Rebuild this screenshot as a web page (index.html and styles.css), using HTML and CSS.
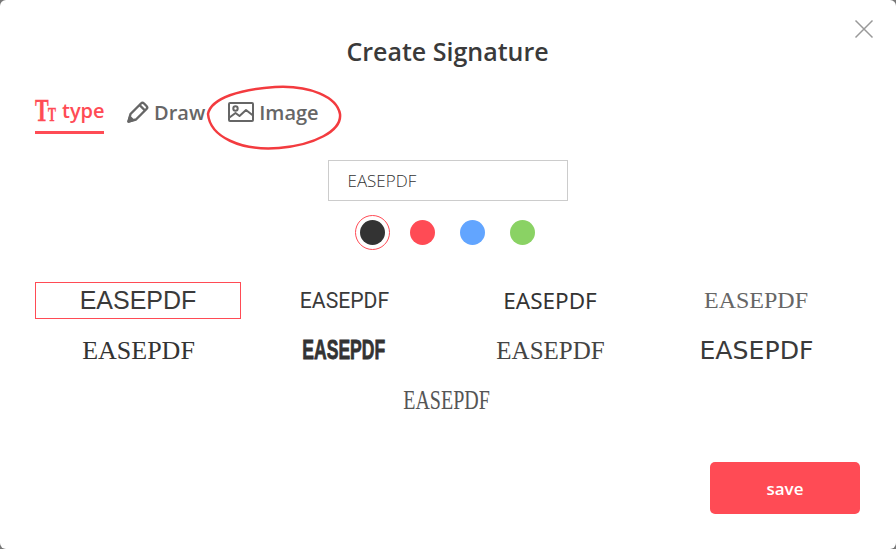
FILE: index.html
```html
<!DOCTYPE html>
<html lang="en">
<head>
    <meta charset="UTF-8">
    <meta name="viewport" content="width=device-width, initial-scale=1.0">
    <title>Create Signature</title>
    <link rel="stylesheet" href="styles.css">
</head>
<body>
    <div class="modal">
        <button class="close-btn" aria-label="Close">
            <svg width="20" height="20" viewBox="0 0 20 20"><path d="M1.5 1.5l17 17M18.5 1.5l-17 17" stroke="#999" stroke-width="1.5" fill="none"/></svg>
        </button>

        <h1 class="modal-title">Create Signature</h1>

        <div class="tabs">
            <a class="tab tab-type active">
                <span class="tt-icon" aria-hidden="true"><span class="tt-big">T</span><span class="tt-small">T</span></span>
                type
            </a>
            <a class="tab tab-draw">
                <svg width="22" height="22" viewBox="0 0 22 22" fill="none" stroke="#666" stroke-width="2.400" stroke-linejoin="round"><path d="M1.500 20.500L3.500 13 14 2.500c1-1 2-1 3 0L19.500 5c1 1 1 2 0 3L9 18.500z"/><path d="M12.500 4l5.500 5.500"/><path d="M1.500 20.500l4.500-1.500-3-3z" fill="#666"/></svg>
                Draw
            </a>
            <a class="tab tab-image">
                <svg width="26" height="20" viewBox="0 0 26 20" fill="none" stroke="#666" stroke-width="2" stroke-linejoin="round"><rect x="1" y="1" width="24" height="18" rx="1"/><circle cx="7.500" cy="6.500" r="2.200"/><path d="M1.500 15.500l6-4.500 4 3 6.500-6 7 5.500"/></svg>
                Image
            </a>
            <svg class="scribble" width="140" height="70" viewBox="0 0 140 70" fill="none"><path d="M5 31C8 15 38 6 72 4c35-2 62 10 65 27 2 17-26 31-61 34C38 68 7 54 5 31z" stroke="#f33b3f" stroke-width="2.500"/></svg>
        </div>

        <div class="name-row">
            <input class="name-input" type="text" value="EASEPDF">
        </div>

        <div class="colors">
            <span class="color-wrap selected"><span class="color color-black"></span></span>
            <span class="color-wrap"><span class="color color-red"></span></span>
            <span class="color-wrap"><span class="color color-blue"></span></span>
            <span class="color-wrap"><span class="color color-green"></span></span>
        </div>

        <div class="sign-list">
            <div class="sign-item selected"><span class="font-1">EASEPDF</span></div>
            <div class="sign-item"><span class="font-2">EASEPDF</span></div>
            <div class="sign-item"><span class="font-3">EASEPDF</span></div>
            <div class="sign-item"><span class="font-4">EASEPDF</span></div>
            <div class="sign-item"><span class="font-5">EASEPDF</span></div>
            <div class="sign-item"><span class="font-6">EASEPDF</span></div>
            <div class="sign-item"><span class="font-7">EASEPDF</span></div>
            <div class="sign-item"><span class="font-8">EASEPDF</span></div>
            <div class="sign-item"><span class="font-9">EASEPDF</span></div>
        </div>

        <div class="modal-footer">
            <button class="save-btn">save</button>
        </div>
    </div>
</body>
</html>
```

FILE: styles.css
```css
* {
    box-sizing: border-box;
}

html, body {
    margin: 0;
    height: 100%;
    overflow: hidden;
}

body {
    font-family: "Open Sans", sans-serif;
    background: #777;
    color: #333;
}

.modal {
    position: relative;
    height: 549px;
    background: white;
    border-radius: 6px;
    padding: 35px 36px 0 35px;
}

.close-btn {
    position: absolute;
    top: 19px;
    right: 22px;
    width: 20px;
    height: 20px;
    padding: 0;
    border: none;
    background: none;
}

.close-btn svg {
    display: block;
}

.modal-title {
    margin: 0;
    font-size: 25px;
    line-height: 32px;
    font-weight: 600;
    text-align: center;
    color: #3a3a3a;
}

.tabs {
    position: relative;
    display: flex;
    margin-top: 25px;
    height: 42px;
}

.tab {
    display: flex;
    align-items: center;
    height: 42px;
    padding-bottom: 2px;
    font-size: 20px;
    font-weight: 600;
    color: #666;
}

.tab-type {
    width: 69px;
    gap: 7px;
    color: #ff4b55;
    border-bottom: 3px solid #ff4b55;
    padding-bottom: 3px;
}

.tab-draw {
    margin-left: 23px;
    gap: 5px;
}

.tab-image {
    margin-left: 23px;
    gap: 5px;
}

.tt-icon {
    display: flex;
    align-items: baseline;
    width: 20px;
    font-family: "Liberation Serif", serif;
    font-weight: 700;
    line-height: 1;
    -webkit-text-stroke: .4px #ff4b55;
}

.tt-big {
    display: inline-block;
    width: 13px;
    font-size: 31px;
    transform: scaleX(.66);
    transform-origin: left;
}

.tt-small {
    display: inline-block;
    width: 7px;
    font-size: 18px;
    transform: scaleX(.66);
    transform-origin: left;
}

.scribble {
    position: absolute;
    left: 168px;
    top: -9px;
}

.name-row {
    display: flex;
    justify-content: center;
    margin-top: 26px;
}

.name-input {
    width: 240px;
    height: 41px;
    padding: 0 19px;
    border: 1px solid #ccc;
    outline: none;
    font-family: "Open Sans", sans-serif;
    font-size: 17px;
    font-weight: 300;
    color: #333;
}

.colors {
    display: flex;
    justify-content: center;
    gap: 15px;
    margin-top: 14px;
}

.color-wrap {
    display: flex;
    align-items: center;
    justify-content: center;
    width: 35px;
    height: 35px;
    border-radius: 50%;
    border: 1px solid transparent;
}

.color-wrap.selected {
    border-color: #ff4b55;
}

.color {
    width: 25px;
    height: 25px;
    border-radius: 50%;
}

.color-black { background: #333; }
.color-red { background: #ff4b55; }
.color-blue { background: #62a5ff; }
.color-green { background: #8ad264; }

.sign-list {
    display: flex;
    flex-wrap: wrap;
    justify-content: center;
    margin-top: 32px;
    margin-right: 1px;
    row-gap: 13px;
}

.sign-item {
    display: flex;
    align-items: center;
    justify-content: center;
    width: 206px;
    height: 37px;
    border: 1px solid transparent;
    white-space: nowrap;
    color: #333;
}

.sign-item.selected {
    border-color: #ff4b55;
}

.font-1 {
    font-family: "Liberation Sans", sans-serif;
    font-size: 25px;
    color: #3a3a3a;
}

.font-2 {
    font-family: "Roboto", sans-serif;
    font-size: 21.200px;
    color: #3a3a3a;
    margin-left: 1px;
}

.font-3 {
    font-family: "Noto Sans", sans-serif;
    font-size: 22.500px;
}

.font-4 {
    font-family: "Liberation Serif", serif;
    font-size: 24px;
    color: #666;
}

.font-5 {
    font-family: "Liberation Serif", serif;
    font-size: 26px;
    margin-left: 1px;
}

.font-6 {
    display: inline-block;
    font-family: "Liberation Sans", sans-serif;
    font-weight: 700;
    font-size: 27px;
    -webkit-text-stroke: .8px #333;
    transform: scaleX(.65);
}

.font-7 {
    font-family: "Liberation Serif", serif;
    font-size: 25px;
    color: #444;
    margin-left: 1px;
}

.font-8 {
    font-family: "DejaVu Sans", sans-serif;
    font-size: 25.200px;
    color: #3a3a3a;
    margin-left: 1px;
}

.font-9 {
    display: inline-block;
    font-family: "Liberation Serif", serif;
    font-size: 27px;
    color: #555;
    transform: scaleX(.74);
}

.modal-footer {
    position: absolute;
    right: 36px;
    bottom: 35px;
}

.save-btn {
    display: block;
    width: 150px;
    height: 52px;
    border: none;
    border-radius: 5px;
    background: #ff4b55;
    color: white;
    font-family: "Open Sans", sans-serif;
    font-size: 17px;
    font-weight: 600;
}
```
